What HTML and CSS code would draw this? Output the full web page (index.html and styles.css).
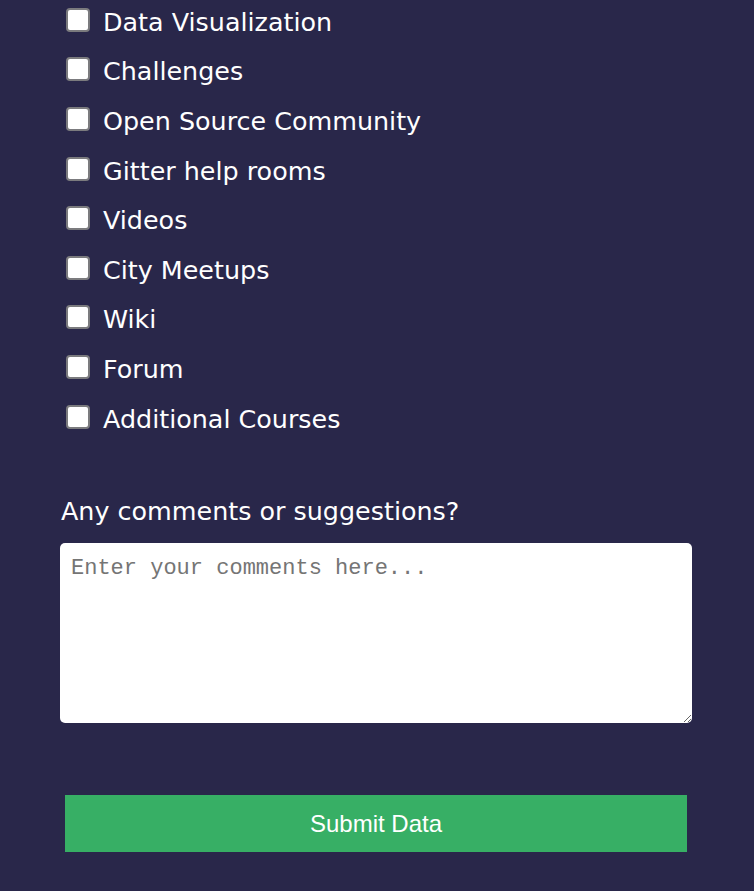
FILE: index.html
```html
<!DOCTYPE html>
<html lang="en">
<head>
<meta charset="utf-8">
<title>Survey</title>
<link rel="stylesheet" href="styles.css">
</head>
<body>
<form class="survey">
  <div class="checks">
    <label class="check"><input type="checkbox"><span>Data Visualization</span></label>
    <label class="check"><input type="checkbox"><span>Challenges</span></label>
    <label class="check"><input type="checkbox"><span>Open Source Community</span></label>
    <label class="check"><input type="checkbox"><span>Gitter help rooms</span></label>
    <label class="check"><input type="checkbox"><span>Videos</span></label>
    <label class="check"><input type="checkbox"><span>City Meetups</span></label>
    <label class="check"><input type="checkbox"><span>Wiki</span></label>
    <label class="check"><input type="checkbox"><span>Forum</span></label>
    <label class="check"><input type="checkbox"><span>Additional Courses</span></label>
  </div>
  <div class="comments">
    <label class="comments-label" for="comments">Any comments or suggestions?</label>
    <textarea id="comments" class="comments-box" placeholder="Enter your comments here..."></textarea>
  </div>
  <button type="submit" class="submit">Submit Data</button>
</form>
</body>
</html>
```
FILE: styles.css
```css
html, body {
  margin: 0;
  padding: 0;
  background: #29274a;
}
body {
  font-family: "DejaVu Sans", "Open Sans", sans-serif;
  color: #ffffff;
  overflow: hidden;
}
.survey {
  width: 632px;
  margin: 0 0 0 60px;
  display: flex;
  flex-direction: column;
}
.checks {
  margin-top: -3px;
  display: flex;
  flex-direction: column;
  padding-left: 6px;
}
.check {
  height: 49.6px;
  display: flex;
  align-items: center;
  font-size: 25.4px;
}
.check input {
  -webkit-appearance: none;
  appearance: none;
  box-sizing: border-box;
  width: 24px;
  height: 24px;
  margin: -4px 13px 0 0;
  border: 2px solid #7b7b7e;
  border-radius: 4px;
  background: #ffffff;
  flex: none;
}
.comments {
  margin-top: 50px;
  display: flex;
  flex-direction: column;
}
.comments-label {
  font-size: 25.4px;
  line-height: 36px;
  margin-bottom: 14px;
  padding-left: 1px;
}
.comments-box {
  box-sizing: border-box;
  width: 632px;
  height: 180px;
  border: none;
  border-radius: 5px;
  padding: 13px 11px;
  font-family: "Liberation Mono", "DejaVu Sans Mono", monospace;
  font-size: 22px;
  background: #ffffff;
  color: #222;
}
.comments-box::placeholder {
  color: #757575;
}
.submit {
  margin: 72px 0 0 5px;
  width: 622px;
  height: 57px;
  border: none;
  background: #37af65;
  color: #ffffff;
  font-family: "Liberation Sans", Arial, sans-serif;
  font-size: 24px;
  cursor: pointer;
}
```
